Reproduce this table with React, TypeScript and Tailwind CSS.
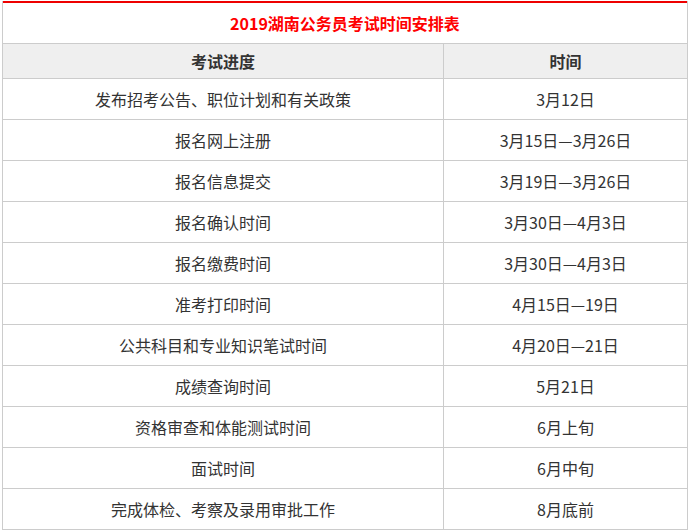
const rows: [string, string][] = [
  ["发布招考公告、职位计划和有关政策", "3月12日"],
  ["报名网上注册", "3月15日—3月26日"],
  ["报名信息提交", "3月19日—3月26日"],
  ["报名确认时间", "3月30日—4月3日"],
  ["报名缴费时间", "3月30日—4月3日"],
  ["准考打印时间", "4月15日—19日"],
  ["公共科目和专业知识笔试时间", "4月20日—21日"],
  ["成绩查询时间", "5月21日"],
  ["资格审查和体能测试时间", "6月上旬"],
  ["面试时间", "6月中旬"],
  ["完成体检、考察及录用审批工作", "8月底前"],
];

export default function App() {
  return (
    <div
      className="w-[690px] h-[532px] overflow-hidden bg-white text-[16px] text-[#333]"
      style={{ fontFamily: '"Microsoft YaHei", "Noto Sans CJK SC", sans-serif' }}
    >
      <div className="ml-[2px] mt-[1px] w-[686px] border-x border-[#cccccc]">
        <div className="h-[43px] border-t-2 border-b border-t-[#ee0000] border-b-[#cccccc] flex items-center justify-center font-bold text-[#ff0000]">
          2019湖南公务员考试时间安排表
        </div>
        <div className="flex h-[35px] bg-[#efefef] border-b border-[#cccccc] font-bold">
          <div className="w-[440px] flex items-center justify-center">考试进度</div>
          <div className="flex-1 border-l border-[#cccccc] flex items-center justify-center">时间</div>
        </div>
        {rows.map(([step, time]) => (
          <div key={step} className="flex h-[41px] border-b border-[#cccccc]">
            <div className="w-[440px] flex items-center justify-center">{step}</div>
            <div className="flex-1 border-l border-[#cccccc] flex items-center justify-center">{time}</div>
          </div>
        ))}
      </div>
      <div className="pl-[52px] pt-[1px] font-bold text-black leading-none">22</div>
    </div>
  );
}
